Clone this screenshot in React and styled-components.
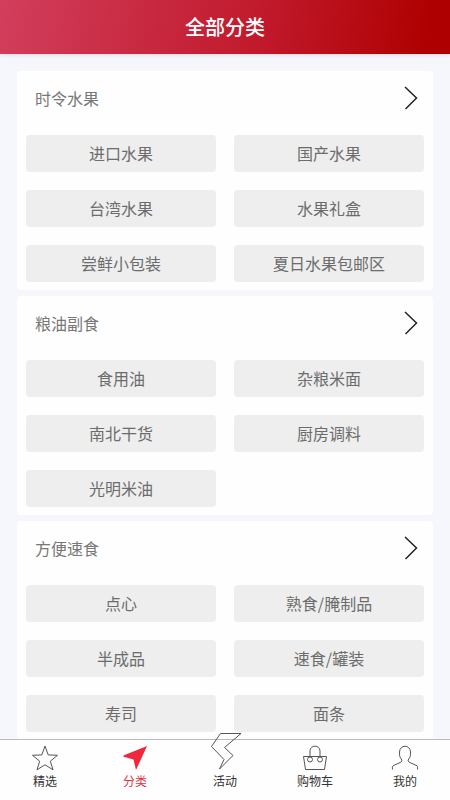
import React from "react";
import styled, { createGlobalStyle } from "styled-components";

const sections = [
  {
    title: "时令水果",
    items: ["进口水果", "国产水果", "台湾水果", "水果礼盒", "尝鲜小包装", "夏日水果包邮区"]
  },
  {
    title: "粮油副食",
    items: ["食用油", "杂粮米面", "南北干货", "厨房调料", "光明米油"]
  },
  {
    title: "方便速食",
    items: ["点心", "熟食/腌制品", "半成品", "速食/罐装", "寿司", "面条"]
  }
];

const StarIcon = () => (
  <Icon viewBox="0 0 30 30">
    <path d="M15 3 L18.2 11.9 L27.5 12.3 L20.3 18.2 L23 26.8 L15 21.8 L7 26.8 L9.7 18.2 L2.5 12.3 L11.8 11.9 Z" />
  </Icon>
);

const ArrowIcon = () => (
  <Icon viewBox="0 0 30 30">
    <path d="M27 3 L16 27 L13.5 16.5 L3 13.5 L4 12.2 Z" fill="#f0283c" stroke="none" />
  </Icon>
);

const BoltIcon = () => (
  <TallIcon viewBox="0 0 32 38">
    <path d="M11.5 1.5 H32 L15.5 15.5 L24 23.5 L10.5 37 L15 27.5 L2.5 14.5 Z" />
  </TallIcon>
);

const BagIcon = () => (
  <Icon viewBox="0 0 30 30">
    <path d="M3.5 13.5 H26.5 L24.5 26.5 H5.5 Z" />
    <path d="M10 14 V8 C10 1.5 20 1.5 20 8 V14" />
    <circle cx="10" cy="16.5" r="2.5" fill="#fefefe" />
    <circle cx="20" cy="16.5" r="2.5" fill="#fefefe" />
  </Icon>
);

const PersonIcon = () => (
  <Icon viewBox="0 0 30 30">
    <path d="M2.5 26.5 C2.2 24 2.2 23 4 22.3 L10 19.6 C12.3 18.5 12.3 17.5 11.2 16 C9.6 14 9.3 11.5 9.5 9 C9.8 1.3 20.2 1.3 20.5 9 C20.7 11.5 20.4 14 18.8 16 C17.7 17.5 17.7 18.5 20 19.6 L26 22.3 C27.8 23 27.8 24 27.5 26.5" />
  </Icon>
);

const tabs = [
  { label: "精选", icon: StarIcon },
  { label: "分类", icon: ArrowIcon, active: true },
  { label: "活动", icon: BoltIcon },
  { label: "购物车", icon: BagIcon },
  { label: "我的", icon: PersonIcon }
];

export default () => (
  <>
    <GlobalStyle />
    <Layout>
      <Header>
        <h1>全部分类</h1>
      </Header>
      <Content>
        {sections.map(({ title, items }) => (
          <Card key={title}>
            <CardHeader href="#">
              <h2>{title}</h2>
              <Chevron viewBox="0 0 14 24" aria-hidden="true">
                <path d="M1 1 L12.5 12 L1.5 23" />
              </Chevron>
            </CardHeader>
            <Grid>
              {items.map(item => (
                <Category key={item}>{item}</Category>
              ))}
            </Grid>
          </Card>
        ))}
      </Content>
      <TabBar>
        {tabs.map(({ label, icon: TabIcon, active }) => (
          <Tab key={label} href="#" $active={active}>
            <TabIcon />
            <span>{label}</span>
          </Tab>
        ))}
      </TabBar>
    </Layout>
  </>
);

const GlobalStyle = createGlobalStyle`
  * {
    box-sizing: border-box;
  }

  body {
    margin: 0;
    font-family: "Noto Sans CJK SC", sans-serif;
    background: #f6f7fc;
  }
`;

const Layout = styled.div`
  display: flex;
  flex-direction: column;
  height: 100vh;
`;

const Header = styled.header`
  display: flex;
  flex-shrink: 0;
  align-items: center;
  justify-content: center;
  height: 54px;
  background: linear-gradient(100deg, #d23e5c 0%, #c0182a 60%, #ae0000 95%);
  box-shadow: 0 1px 4px rgba(0, 0, 0, 0.12);

  h1 {
    margin: 0;
    color: #fff;
    font-size: 20px;
    font-weight: 500;
    line-height: 30px;
  }
`;

const Content = styled.main`
  display: flex;
  flex: 1;
  flex-direction: column;
  gap: 6px;
  min-height: 0;
  padding: 17px 17px 0;
  overflow-y: auto;
  scrollbar-width: none;
`;

const Card = styled.section`
  flex-shrink: 0;
  padding: 0 9px 8px;
  background: #fefefe;
  border-radius: 4px;
`;

const CardHeader = styled.a`
  display: flex;
  align-items: center;
  justify-content: space-between;
  height: 54px;
  margin-bottom: 10px;
  padding: 0 6px 0 9px;
  color: #777;
  text-decoration: none;

  h2 {
    margin: 0;
    font-size: 16px;
    font-weight: 400;
    line-height: 24px;
  }
`;

const Chevron = styled.svg`
  width: 14px;
  height: 24px;
  fill: none;
  stroke: #222;
  stroke-width: 1.5;
`;

const Grid = styled.div`
  display: grid;
  grid-template-columns: 1fr 1fr;
  gap: 18px;
`;

const Category = styled.button`
  height: 37px;
  padding: 0 0 2px;
  border: 0;
  border-radius: 4px;
  background: #eee;
  color: #6c6c6c;
  font-family: inherit;
  font-size: 16px;
  line-height: 24px;
  cursor: pointer;
`;

const TabBar = styled.nav`
  display: flex;
  flex-shrink: 0;
  height: 61px;
  border-top: 1px solid #bbb;
  background: #fefefe;
`;

const Tab = styled.a`
  display: flex;
  flex: 1;
  flex-direction: column;
  align-items: center;
  justify-content: flex-end;
  padding-bottom: 10px;
  color: ${props => (props.$active ? "#d8384a" : "#333")};
  font-size: 12px;
  line-height: 18px;
  text-decoration: none;
`;

const Icon = styled.svg`
  flex-shrink: 0;
  width: 30px;
  height: 30px;
  margin-bottom: -1px;
  fill: none;
  stroke: #555;
  stroke-width: 1;
`;

// the bolt is taller than the other icons and sticks out of the bar
const TallIcon = styled(Icon)`
  width: 32px;
  height: 38px;
  margin-bottom: 2px;
  overflow: visible;
`;
